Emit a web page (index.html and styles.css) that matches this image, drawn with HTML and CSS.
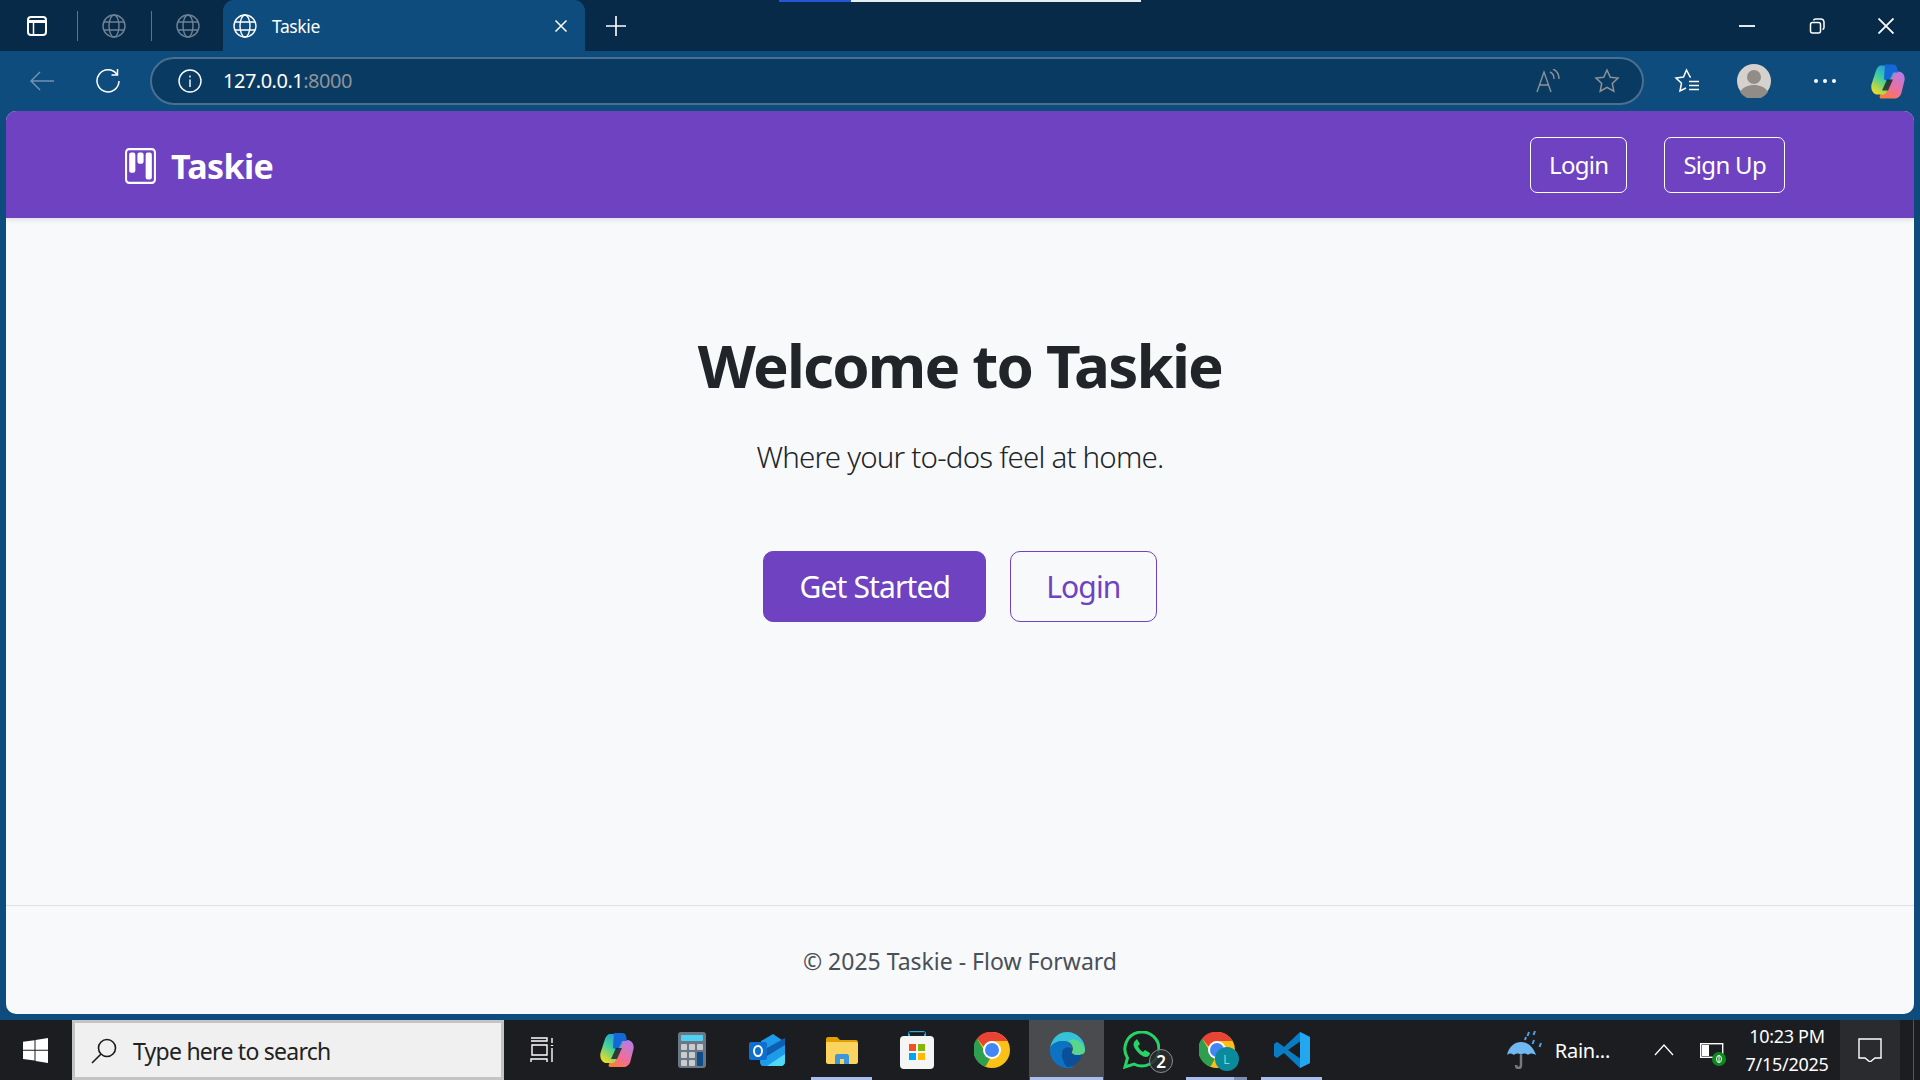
FILE: index.html
```html
<!DOCTYPE html>
<html lang="en">

<head>
	<title>Taskie</title>
	<link rel="stylesheet" href="styles.css">
</head>

<body>

	<svg class="icon-defs" width="0" height="0">
		<defs>
			<symbol id="globe" viewBox="0 0 24 24">
				<g fill="none" stroke="currentColor" stroke-width="1.400">
					<circle cx="12" cy="12" r="11"/>
					<ellipse cx="12" cy="12" rx="5" ry="11"/>
					<path d="M2 8h20M2 16h20"/>
				</g>
			</symbol>
			<linearGradient id="cop-a" x1="0.8" y1="0" x2="0.2" y2="1">
				<stop offset="0" stop-color="#1a8fe8"/>
				<stop offset="0.5" stop-color="#3fcfa0"/>
				<stop offset="1" stop-color="#f5dc20"/>
			</linearGradient>
			<linearGradient id="cop-b" x1="0.8" y1="0" x2="0.2" y2="1">
				<stop offset="0" stop-color="#b77be8"/>
				<stop offset="0.6" stop-color="#ee6f98"/>
				<stop offset="1" stop-color="#ff7a3c"/>
			</linearGradient>
			<symbol id="copilot" viewBox="0 0 34 36">
				<path d="M24 8h3c4.500 0 7.500 4 6.500 9l-3 12c-1 4-4 6-7 6H11c-2 0-3-1-2-3l9-22c1-1 4-2 6-2z" fill="url(#cop-b)"/>
				<path d="M10 2h12c2 0 3 1 2.500 3L16 28c-1 2-2 3-4 3H7c-5 0-7.500-5-6.500-10L5 7c1-3 3-5 5-5z" fill="url(#cop-a)"/>
				<path d="M14 1h8c2.500 0 3.500 1 4 3l1 5h-5l-4 9-5-2z" fill="#1566d6"/>
				<path d="M16 16h6l-5 11h-6z" fill="#1c1d20" opacity=".8"/>
			</symbol>
			<symbol id="chrome" viewBox="0 0 36 36">
				<circle cx="18" cy="18" r="18" fill="#fbc117"/>
				<path d="M18 0a18 18 0 0 1 15.600 9H18a9 9 0 0 0-8.400 5.600L3 6.500A18 18 0 0 1 18 0z" fill="#e94335"/>
				<path d="M10 18l8 0 -2 8.500 -4.500 8.300A18 18 0 0 1 3 6.500z" fill="#2f9e4f"/>
				<circle cx="18" cy="18" r="9" fill="#fff"/>
				<circle cx="18" cy="18" r="7" fill="#4285f4"/>
			</symbol>
		</defs>
	</svg>

	<div class="tabstrip">
		<span class="strip-btn first">
			<svg width="20" height="20" viewBox="0 0 20 20" fill="none" stroke="#fff" stroke-width="2"><rect x="1" y="1" width="18" height="18" rx="3"/><path d="M1.500 5.500h17" stroke-width="3"/><path d="M6.500 6v12" stroke-width="1.500"/></svg>
		</span>
		<span class="strip-sep"></span>
		<span class="strip-btn"><svg class="dim-globe" width="24" height="24"><use href="#globe"/></svg></span>
		<span class="strip-sep"></span>
		<span class="strip-btn"><svg class="dim-globe" width="24" height="24"><use href="#globe"/></svg></span>
		<div class="tab">
			<svg class="tab-globe" width="24" height="24"><use href="#globe"/></svg>
			<span class="tab-title">Taskie</span>
			<svg width="14" height="14" viewBox="0 0 14 14" stroke="#fff" stroke-width="1.500"><path d="M1.500 1.500l11 11M12.500 1.500l-11 11"/></svg>
		</div>
		<span class="new-tab">
			<svg width="22" height="22" viewBox="0 0 22 22" stroke="#fff" stroke-width="1.600"><path d="M11 1v20M1 11h20"/></svg>
		</span>
		<span class="strip-progress"><i></i><b></b></span>
		<div class="win-controls">
			<svg width="16" height="16" viewBox="0 0 16 16" stroke="#fff" stroke-width="1.800"><path d="M0 8h16"/></svg>
			<svg width="16" height="16" viewBox="0 0 16 16" fill="none" stroke="#fff" stroke-width="1.500"><rect x="1.500" y="4.500" width="10" height="10.500" rx="2"/><path d="M4.500 2.500c.3-1 1-1.500 2-1.500h5c2 0 3.500 1.500 3.500 3.500v5c0 1-.5 1.700-1.500 2"/></svg>
			<svg width="16" height="16" viewBox="0 0 16 16" stroke="#fff" stroke-width="1.800"><path d="M.5.500l15 15M15.500.500l-15 15"/></svg>
		</div>
	</div>

	<div class="toolbar">
		<svg class="back-btn" width="24" height="20" viewBox="0 0 24 20" fill="none" stroke="#6f93b3" stroke-width="1.500"><path d="M24 10H1M10 1l-9 9 9 9"/></svg>
		<svg class="reload-btn" width="24" height="24" viewBox="0 0 24 24" fill="none" stroke="#fff" stroke-width="1.500"><path d="M21 5.500A11 11 0 1 0 23 12"/><path d="M21.500 0v6h-6"/></svg>
		<div class="address-bar">
			<svg width="24" height="24" viewBox="0 0 24 24" fill="none" stroke="#fff" stroke-width="1.400"><circle cx="12" cy="12" r="11"/><path d="M12 10.500V18M12 6.500v2"/></svg>
			<span class="url">127.0.0.1<span class="port">:8000</span></span>
			<span class="address-right">
				<svg width="24" height="24" viewBox="0 0 24 24" fill="none" stroke="#8d9298" stroke-width="1.400"><path d="M1 23L8 3l7 20M3.500 16h9"/><path d="M14 3c2.500 1 4 3.500 4 7M17 0c3.500 1.500 6 5 6 10"/></svg>
				<svg width="26" height="26" viewBox="0 0 26 26" fill="none" stroke="#8d9298" stroke-width="1.500"><path d="M13 2l3.300 7.200 7.700.9-5.700 5.300 1.500 7.800L13 19.300l-6.800 3.900 1.500-7.800L2 10.100l7.700-.9z"/></svg>
			</span>
		</div>
		<div class="toolbar-icons">
			<svg class="fav-icon" width="26" height="26" viewBox="0 0 26 26" fill="none" stroke="#fff" stroke-width="1.500"><path d="M17 9l-1-.200L12.500 2 9.500 9 2 10l5.500 5.200L6 23l6-3"/><path d="M15 13.500h10M15 17.500h10M15 21.500h10"/></svg>
			<svg class="avatar" width="34" height="34" viewBox="0 0 34 34"><circle cx="17" cy="17" r="17" fill="#d5d2cd"/><circle cx="17" cy="13" r="7" fill="#918c86"/><path d="M3 28c3-5 8-7 14-7s11 2 14 7a17 17 0 0 1-28 0z" fill="#918c86"/></svg>
			<span class="dots"><i></i><i></i><i></i></span>
			<svg class="copilot-icon" width="34" height="37"><use href="#copilot"/></svg>
		</div>
	</div>

	<div class="page">
		<nav class="navbar">
			<a class="brand">
				<svg width="33" height="36" viewBox="0 0 16 16" preserveAspectRatio="none" fill="#fff"><path d="M13.500 1a1 1 0 0 1 1 1v12a1 1 0 0 1-1 1h-11a1 1 0 0 1-1-1V2a1 1 0 0 1 1-1h11zm-11-1a2 2 0 0 0-2 2v12a2 2 0 0 0 2 2h11a2 2 0 0 0 2-2V2a2 2 0 0 0-2-2h-11z"/><path d="M6.500 3a1 1 0 0 1 1-1h1a1 1 0 0 1 1 1v3a1 1 0 0 1-1 1h-1a1 1 0 0 1-1-1V3zm-4 0a1 1 0 0 1 1-1h1a1 1 0 0 1 1 1v7a1 1 0 0 1-1 1h-1a1 1 0 0 1-1-1V3zm8 0a1 1 0 0 1 1-1h1a1 1 0 0 1 1 1v10a1 1 0 0 1-1 1h-1a1 1 0 0 1-1-1V3z"/></svg>
				Taskie
			</a>
			<div class="nav-links">
				<a class="nav-btn">Login</a>
				<a class="nav-btn">Sign Up</a>
			</div>
		</nav>

		<main class="hero">
			<h1>Welcome to Taskie</h1>
			<p class="lead">Where your to-dos feel at home.</p>
			<div class="hero-btns">
				<a class="btn btn-solid">Get Started</a>
				<a class="btn btn-outline">Login</a>
			</div>
		</main>

		<footer class="footer">© 2025 Taskie - Flow Forward</footer>
	</div>

	<div class="taskbar">
		<svg class="start" width="25" height="25" viewBox="0 0 25 25" fill="#fff"><path d="M0 3.800l11.500-1.600v9.600H0zM12.500 2l12.500-2v11.800H12.500zM0 12.800h11.500v9.800L0 21zM12.500 12.800H25V25l-12.500-2z"/></svg>
		<div class="search">
			<svg width="26" height="26" viewBox="0 0 26 26" fill="none" stroke="#1b1b1b" stroke-width="1.600"><circle cx="16" cy="10" r="8.500"/><path d="M10 16L1 25"/></svg>
			<span>Type here to search</span>
		</div>
		<div class="task-icons">
			<span class="task-icon">
				<svg width="24" height="26" viewBox="0 0 24 26" fill="none" stroke="#fff" stroke-width="1.400"><path d="M1 1h16v3H1M1 25v-3h16v3M2 8h15v10H2zM22 1v5M22 11v14"/><path d="M22 8v1" stroke-width="2.500"/></svg>
			</span>
			<span class="task-icon"><svg width="34" height="36"><use href="#copilot"/></svg></span>
			<span class="task-icon">
				<svg width="28" height="36" viewBox="0 0 28 36"><rect width="28" height="36" rx="3" fill="#6b7883"/><rect x="3" y="3" width="22" height="6" rx="1" fill="#4fd1f5"/><g fill="#c8ccd0"><rect x="3" y="12" width="6" height="6" rx="1"/><rect x="11" y="12" width="6" height="6" rx="1"/><rect x="19" y="12" width="6" height="6" rx="1"/><rect x="3" y="20" width="6" height="6" rx="1"/><rect x="11" y="20" width="6" height="6" rx="1"/><rect x="3" y="28" width="6" height="6" rx="1"/><rect x="11" y="28" width="6" height="6" rx="1"/></g><rect x="19" y="20" width="6" height="14" rx="1" fill="#0f4c8a"/></svg>
			</span>
			<span class="task-icon">
				<svg width="36" height="32" viewBox="0 0 36 32"><path d="M12 7l12-7 12 8v20c0 2-2 4-4 4H14c-2 0-3-2-3-4z" fill="#1e9be8"/><path d="M18 32l18-12v8c0 2-2 4-4 4z" fill="#4fd8f8"/><path d="M18 14l18-10v7L18 22z" fill="#0f5fb0"/><rect y="8" width="18" height="18" rx="2" fill="#0f6fd0"/><ellipse cx="9" cy="17" rx="4" ry="5" fill="none" stroke="#fff" stroke-width="2"/></svg>
			</span>
			<span class="task-icon underlined">
				<svg width="32" height="27" viewBox="0 0 32 27"><path d="M0 2c0-1 1-2 2-2h9l3 3h16c1 0 2 1 2 2v4H0z" fill="#e0a100"/><path d="M0 5h30c1 0 2 1 2 2v18c0 1-1 2-2 2H2c-1 0-2-1-2-2z" fill="#fbd35f"/><path d="M9 27v-8c0-1 1-2 2-2h10c1 0 2 1 2 2v8h-5v-5h-4v5z" fill="#3d96dc"/></svg>
			</span>
			<span class="task-icon">
				<svg width="34" height="38" viewBox="0 0 34 38"><path d="M9 9V3c0-1 1-2 2-2h12c1 0 2 1 2 2v6" fill="none" stroke="#2ea8e8" stroke-width="2"/><path d="M9 2h16" stroke="#111" stroke-width="1.500"/><rect y="5" width="34" height="33" rx="4" fill="#f5f5f5"/><rect x="9" y="13" width="7" height="7" fill="#f25022"/><rect x="18" y="13" width="7" height="7" fill="#7fba00"/><rect x="9" y="22" width="7" height="7" fill="#00a4ef"/><rect x="18" y="22" width="7" height="7" fill="#ffb900"/></svg>
			</span>
			<span class="task-icon"><svg width="36" height="36"><use href="#chrome"/></svg></span>
			<span class="task-icon active">
				<svg width="36" height="36" viewBox="0 0 36 36"><path d="M1 17C2 7 9 0 18 0c10 0 18 8 18 17 0 4-3 6-7 6-3 0-6-1-6-3 0-1 1-1 1-3 0-4-4-8-9-8-7 0-13 3-14 8z" fill="#35c1d8"/><path d="M27 8c5 2 9 6 9 10 0 4-3 5-7 5-3 0-6-1-6-3 0-1 1-1 1-3 0-3-1-6-4-8 2-2 5-2 7-1z" fill="#58d68d"/><path d="M1 17c1-5 7-8 13-8 5 0 9 4 9 8-4-3-10-1-10 5 0 6 5 12 12 13-2 1-5 1-7 1C9 36 0 27 1 17z" fill="#0c73c4"/><path d="M13 22c0-6 6-8 10-5 0 1-1 2-1 3 0 3 3 3 6 3 2 0 4 0 5-1-2 8-8 13-15 13-3-3-5-8-5-13z" fill="#0a4f9c"/></svg>
			</span>
			<span class="task-icon">
				<span class="badge-wrap">
					<svg width="37" height="38" viewBox="0 0 37 38"><path d="M2 36l2.500-9A17 17 0 1 1 11 33z" fill="none" stroke="#25d366" stroke-width="3"/><path d="M12 10c-2 2-2 5 1 9s7 7 10 7c2 0 4-2 4-4l-5-3-2 2c-2-1-4-3-5-6l2-2-3-5z" fill="#25d366"/></svg>
					<span class="wa-badge">2</span>
				</span>
			</span>
			<span class="task-icon underlined split">
				<span class="badge-wrap">
					<svg width="36" height="36"><use href="#chrome"/></svg>
					<span class="profile-badge">L</span>
				</span>
			</span>
			<span class="task-icon underlined">
				<svg width="36" height="36" viewBox="0 0 36 36"><path d="M26 0l10 5v26l-10 5-16-15-7 5-3-2V12l3-2 7 5z" fill="#0a7cc4"/><path d="M26 0l10 5v26l-10 5z" fill="#22a7f0"/><path d="M26 9.500L14 18l12 8.500z" fill="#1c1d20"/><path d="M3 10l7 5-7 3z" fill="#0a7cc4"/></svg>
			</span>
		</div>
		<div class="tray">
			<span class="weather">
				<svg width="35" height="38" viewBox="0 0 35 38"><path d="M0 24C2 15 8 11 14 11s12 4 15 13c-3-2-6-2-8 0-2-2-5-2-7 0-2-2-5-2-7 0-3-2-5-2-7 0z" fill="#6fb8f2"/><path d="M14 24v10c0 4-5 4-5 0" fill="none" stroke="#77797c" stroke-width="2.500"/><g stroke="#4da3e8" stroke-width="2"><path d="M22 1l-1.500 4M28 0l-1.500 4M27 9l-1.500 4M34 12l-1.500 4M19 6l-1 3"/></g></svg>
				Rain...
			</span>
			<svg class="caret" width="20" height="12" viewBox="0 0 20 12" fill="none" stroke="#fff" stroke-width="1.300"><path d="M1 11l9-10 9 10"/></svg>
			<span class="battery">
				<svg width="24" height="15" viewBox="0 0 24 15"><rect x=".7" y=".7" width="22" height="13.600" fill="none" stroke="#fff" stroke-width="1.400"/><rect x="2" y="2" width="7" height="11" fill="#fff"/></svg>
				<svg class="leaf" width="14" height="14" viewBox="0 0 14 14"><circle cx="7" cy="7" r="7" fill="#0c8a1f"/><ellipse cx="7" cy="7" rx="2.500" ry="3.500" fill="none" stroke="#fff"/><path d="M7 3v8" stroke="#fff"/></svg>
			</span>
			<div class="clock"><span>10:23 PM</span><span>7/15/2025</span></div>
			<span class="notif">
				<svg width="24" height="24" viewBox="0 0 24 24" fill="none" stroke="#fff" stroke-width="1.400"><path d="M1 1h22v19h-6l-5 4-5-4H1z"/></svg>
			</span>
			<span class="show-desktop"></span>
		</div>
	</div>

</body>

</html>
```

FILE: styles.css
```css
:root {
	--window-blue: #0e4c7e;
	--strip-dark: #062a48;
	--purple: #6f42c1;
	--page-bg: #f8f9fa;
	--text-dark: #212529;
}
* { box-sizing: border-box; }
html, body { height: 100%; }
body {
	margin: 0;
	display: flex;
	flex-direction: column;
	height: 1080px;
	overflow: hidden;
	background: var(--window-blue);
	font-family: "Noto Sans", "Open Sans", Arial, sans-serif;
}
svg { display: block; flex: none; }
.icon-defs { position: absolute; }

/* browser tab strip */
.tabstrip {
	height: 51px;
	flex: none;
	display: flex;
	align-items: center;
	background: var(--strip-dark);
	position: relative;
}
.strip-btn { width: 74px; display: flex; justify-content: center; }
.strip-btn.first { width: 77px; padding-right: 4px; }
.strip-sep { width: 1px; height: 30px; background: #5b7489; margin-right: -1px; }
.dim-globe { color: #6f8294; }
.tab {
	width: 362px;
	height: 51px;
	margin-left: -2px;
	padding: 0 17px 0 10px;
	display: flex;
	align-items: center;
	color: #fff;
	background: var(--window-blue);
	border-radius: 11px 11px 0 0;
}
.tab-title { flex: 1; margin-left: 15px; font-size: 17.500px; letter-spacing: -0.4px; }
.new-tab { margin-left: 20px; }
.strip-progress { position: absolute; top: 0; left: 779px; display: flex; height: 2px; }
.strip-progress i { width: 72px; background: #2457d6; }
.strip-progress b { width: 290px; background: #e8edf2; }
.win-controls {
	margin-left: auto;
	width: 181px;
	padding-right: 26px;
	display: flex;
	justify-content: space-between;
}

/* address row */
.toolbar {
	height: 60px;
	flex: none;
	display: flex;
	align-items: center;
	padding-left: 30px;
}
.reload-btn { margin-left: 42px; }
.address-bar {
	width: 1494px;
	height: 48px;
	margin-left: 30px;
	margin-top: -1px;
	padding: 0 20px 0 26px;
	display: flex;
	align-items: center;
	background: #093a62;
	border: 2px solid #4a6f8f;
	border-radius: 24px;
}
.url { margin-left: 21px; font-size: 20px; color: #fff; letter-spacing: -0.5px; }
.port { color: #8f9499; }
.address-right { margin-left: auto; display: flex; align-items: center; gap: 34px; margin-right: 2px; }
.toolbar-icons { display: flex; align-items: center; margin-left: 30px; }
.avatar { margin-left: 37px; }
.dots { display: flex; gap: 5px; margin-left: 43px; }
.dots i { width: 4px; height: 4px; border-radius: 50%; background: #fff; }
.copilot-icon { margin-left: 35px; }

/* site */
.page {
	flex: 1;
	margin: 0 6px 6px;
	display: flex;
	flex-direction: column;
	background: var(--page-bg);
	border-radius: 10px;
	overflow: hidden;
}
.navbar {
	height: 107px;
	flex: none;
	display: flex;
	align-items: center;
	justify-content: space-between;
	padding: 0 129px 0 118px;
	background: var(--purple);
	box-shadow: 0 2px 5px rgba(0,0,0,.1);
}
.brand {
	display: flex;
	align-items: center;
	gap: 14px;
	margin-top: 2px;
	color: #fff;
	font-size: 34px;
	font-weight: 700;
	letter-spacing: -0.6px;
}
.nav-links { display: flex; gap: 37px; }
.nav-btn {
	height: 56px;
	padding: 0 18px;
	display: flex;
	align-items: center;
	color: #fff;
	font-size: 24px;
	letter-spacing: -0.7px;
	border: 1px solid #fff;
	border-radius: 7px;
}
.hero { flex: 1; display: flex; flex-direction: column; align-items: center; padding-top: 111px; }
.hero h1 { margin: 0; color: var(--text-dark); font-size: 60px; line-height: 72px; font-weight: 700; letter-spacing: -1.8px; }
.lead { margin: 36px 0 0; color: var(--text-dark); font-size: 29.500px; font-weight: 300; line-height: 40px; letter-spacing: -0.8px; }
.hero-btns { display: flex; gap: 24px; margin-top: 74px; }
.btn {
	height: 71px;
	padding: 0 35px;
	display: flex;
	align-items: center;
	font-size: 30px;
	letter-spacing: -0.85px;
	border-radius: 10px;
	border: 1px solid var(--purple);
	color: var(--purple);
}
.btn-solid { background: var(--purple); color: #fff; }
.footer {
	height: 109px;
	flex: none;
	padding-top: 39px;
	text-align: center;
	color: #495057;
	font-size: 23px;
	line-height: 32px;
	border-top: 1px solid #dee2e6;
}

/* windows taskbar */
.taskbar {
	height: 60px;
	flex: none;
	display: flex;
	align-items: center;
	background: #1c1d20;
	color: #fff;
}
.start { margin: 0 24px 0 23px; }
.search {
	width: 432px;
	height: 60px;
	padding: 1px 0 0 16px;
	display: flex;
	align-items: center;
	gap: 16px;
	color: #222;
	font-size: 23px;
	letter-spacing: -0.75px;
	background: #f0f0f0;
	border: 3px solid #c4c4c4;
}
.task-icons { display: flex; }
.task-icon {
	width: 75px;
	height: 60px;
	display: flex;
	align-items: center;
	justify-content: center;
	position: relative;
}
.task-icon.active { background: #4a4b4e; }
.task-icon.underlined::after,
.task-icon.active::after {
	content: "";
	position: absolute;
	left: 7px;
	right: 7px;
	bottom: 0;
	height: 3px;
	background: #a9bdee;
}
.task-icon.active::after { left: 1px; right: 1px; }
.task-icon.split::after { background: linear-gradient(90deg, #a9bdee 79%, #7e8db5 79%); }
.badge-wrap { position: relative; display: block; }
.wa-badge {
	position: absolute;
	right: -13px;
	bottom: -4px;
	width: 24px;
	height: 24px;
	display: flex;
	align-items: center;
	justify-content: center;
	font-size: 17px;
	font-weight: 600;
	background: rgba(42,43,46,.85);
	border: 1px solid #8a8b8e;
	border-radius: 50%;
}
.profile-badge {
	position: absolute;
	right: -4px;
	bottom: -3px;
	width: 24px;
	height: 24px;
	display: flex;
	align-items: center;
	justify-content: center;
	font-size: 12px;
	color: #7fd8e0;
	background: #0a8a9a;
	border-radius: 50%;
}
.tray { margin-left: auto; display: flex; align-items: center; height: 60px; }
.weather { display: flex; align-items: center; gap: 13px; font-size: 20px; letter-spacing: -0.3px; }
.caret { margin-left: 44px; }
.battery { display: block; position: relative; margin-left: 26px; width: 24px; }
.leaf { position: absolute; right: -2px; bottom: -8px; }
.clock {
	width: 106px;
	margin-left: 10px;
	display: flex;
	flex-direction: column;
	align-items: center;
	gap: 4px;
	font-size: 18px;
	letter-spacing: -0.3px;
	line-height: 24px;
}
.notif {
	width: 60px;
	height: 60px;
	display: flex;
	align-items: center;
	justify-content: center;
	background: #2a2b2e;
}
.show-desktop { width: 20px; height: 60px; padding-left: 13px; }
.show-desktop::before { content: ""; display: block; width: 1px; height: 60px; background: #55565a; }
```
